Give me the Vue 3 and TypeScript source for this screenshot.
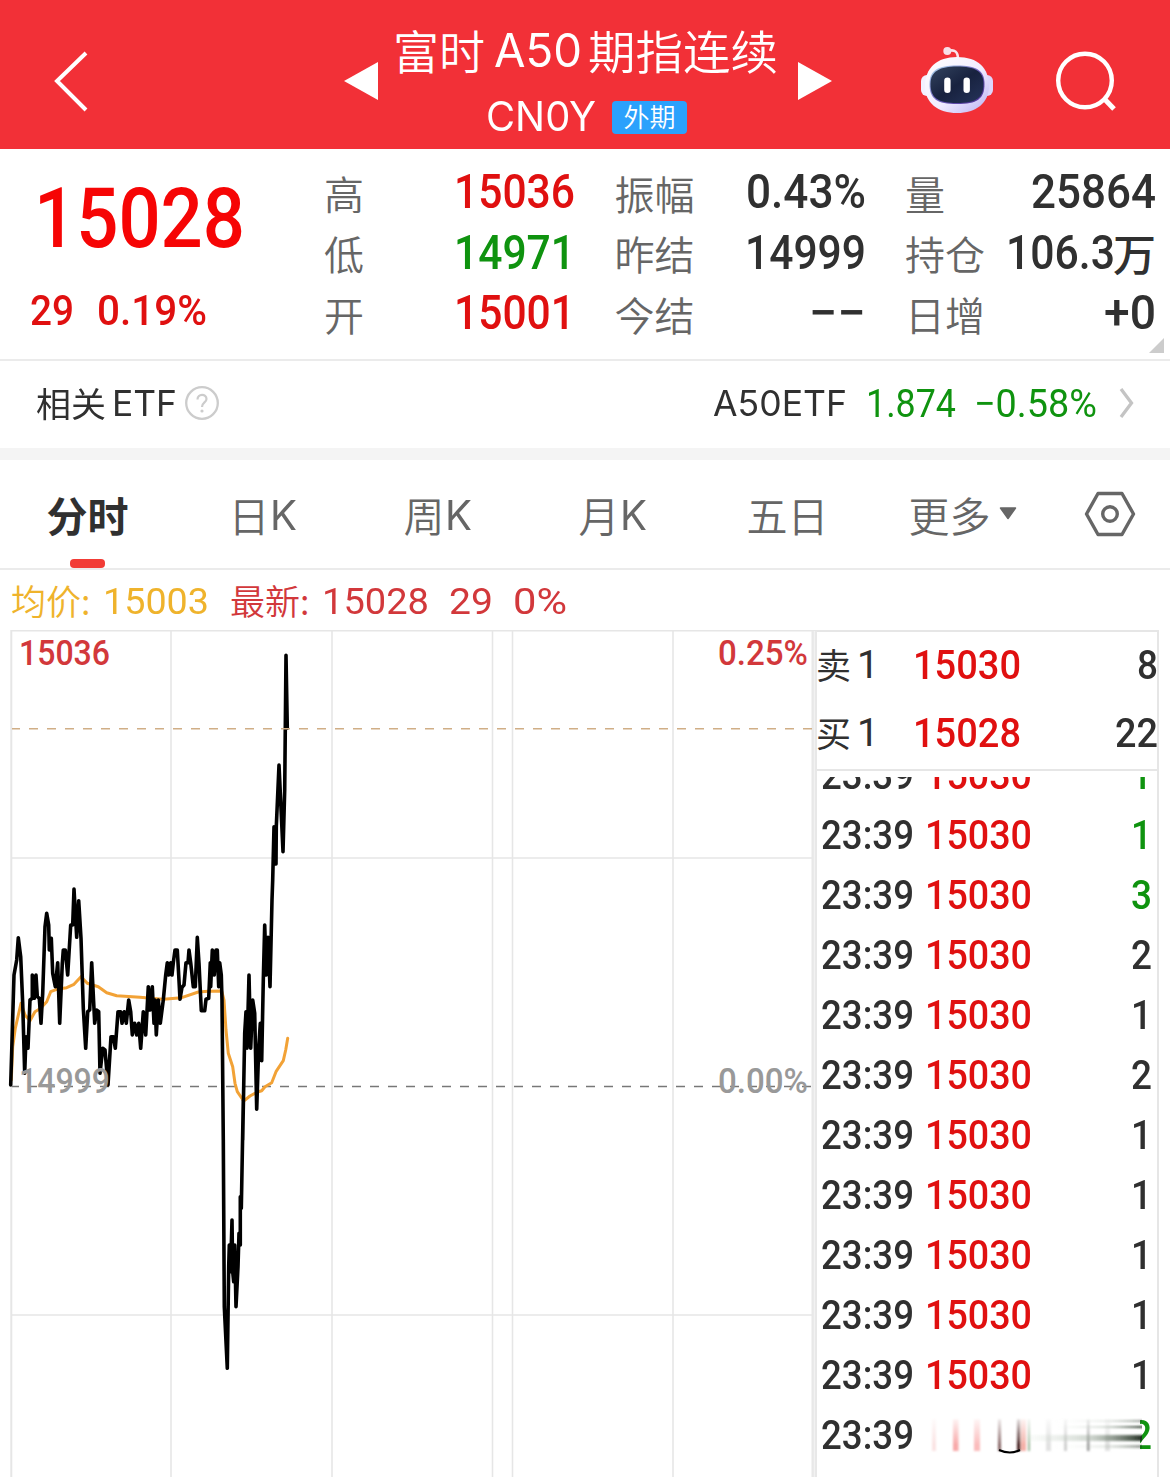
<script setup lang="ts">
import type { Directive } from 'vue'

type Tone = 'up' | 'down' | 'flat'

// Condenses or widens a run of text so that it takes exactly the given width.
const vFit: Directive<HTMLElement, number> = {
  mounted(el, binding) {
    const natural = el.getBoundingClientRect().width
    if (!natural) return
    el.style.transform = `scaleX(${binding.value / natural})`
    el.style.marginRight = `${binding.value - natural}px`
  },
}

interface Stat { label: string; value: string; width: number; tone: Tone; unit?: string }

const stats: Stat[] = [
  { label: '高', value: '15036', width: 121, tone: 'up' },
  { label: '振幅', value: '0.43%', width: 120, tone: 'flat' },
  { label: '量', value: '25864', width: 125, tone: 'flat' },
  { label: '低', value: '14971', width: 121, tone: 'down' },
  { label: '昨结', value: '14999', width: 121, tone: 'flat' },
  { label: '持仓', value: '106.3', width: 109, tone: 'flat', unit: '万' },
  { label: '开', value: '15001', width: 121, tone: 'up' },
  { label: '今结', value: '−−', width: 57, tone: 'flat' },
  { label: '日增', value: '+0', width: 52, tone: 'flat' },
]

const quotes = [
  { side: '卖', price: '15030', qty: '8', width: 21 },
  { side: '买', price: '15028', qty: '22', width: 43 },
]

const trades: { qty: string; tone: Tone }[] = [
  { qty: '1', tone: 'down' },
  { qty: '1', tone: 'down' },
  { qty: '3', tone: 'down' },
  { qty: '2', tone: 'flat' },
  { qty: '1', tone: 'flat' },
  { qty: '2', tone: 'flat' },
  { qty: '1', tone: 'flat' },
  { qty: '1', tone: 'flat' },
  { qty: '1', tone: 'flat' },
  { qty: '1', tone: 'flat' },
  { qty: '1', tone: 'flat' },
]

// Series are stored in thirds of a pixel, relative to the start of each section.
function section(ox: number, oy: number, data: string): string {
  return data
    .trim()
    .split(/\s+/)
    .map((pair) => {
      const [x, y] = pair.split(',').map(Number)
      return `${(ox + x / 3).toFixed(1)},${(oy + y / 3).toFixed(1)}`
    })
    .join(' ')
}

const priceLine = [
  section(0, 860, `32,675 42,345 50,300 55,233 62,290 68,430 74,640 78,530 84,565 90,420 97,415 97,345 103,415 108,345
    112,410 118,415 123,490 128,400 135,200 140,160 146,195 148,270 154,235 158,340 166,380 173,308 179,490 187,310
    190,270 196,270 203,345 212,195 218,195 222,87 230,232 236,122 243,235 250,445 257,565 263,455 269,450 275,308
    284,490 290,450 296,455 300,640 308,565 315,570 324,675 333,530 340,530 346,565 354,455 362,455 366,490 373,455
    379,490 386,420 392,455 397,525 404,490 410,525 416,490 422,565 430,455 437,525 445,380 450,450 457,380 462,490
    465,420 469,525 475,420 481,490 490,420 497,345`),
  section(150, 900, `52,188 56,225 62,188 66,225 70,188 75,150 82,150 86,225 90,298 96,262 102,255 108,188 114,188
    117,150 122,188 130,260 136,260 142,112 147,190 154,332 164,332 168,298 176,295 181,188 182,260 187,150 193,225
    198,150 202,150 206,260 209,188 214,225 216,300 220,720`),
  section(200, 1100, `73,620 82,805 86,500 88,435 91,515 94,435 96,360 98,515 101,545 104,435 108,620 114,500 117,400
    121,435 121,290 124,325 130,0`),
  section(150, 900, `278,720 284,400 288,335 291,445 294,335 297,225 302,445 308,300 314,340 320,628 326,445 331,370
    335,482 340,240 344,75 349,225 354,112 360,260 366,0`),
  section(200, 640, '218,720 222,560 228,672 229,560 237,375 249,635 254,450 258,46 262,265'),
].join(' ')

const averageLine = [
  section(0, 860, `34,660 38,560 46,505 63,430 75,465 90,482 105,455 122,445 140,425 152,395 170,388 200,383 222,373
    243,350 262,370 295,380 320,398 350,407 420,412 470,416`),
  section(150, 900, `40,298 95,293 145,276 175,274 215,273 222,300 228,390 235,460 248,500 255,550 262,575 281,603
    300,588 320,577 335,572 345,560 365,548 378,515 400,482 407,450 413,415`),
].join(' ')

const gridX = [171, 332, 492.5, 512.5, 673]
</script>

<template>
  <div class="page">
    <header class="topbar">
      <svg class="back" width="40" height="64" viewBox="0 0 40 64">
        <path d="M34 4 L5 32 L34 61" fill="none" stroke="#fff" stroke-width="4" />
      </svg>
      <svg class="prev" width="34" height="38" viewBox="0 0 34 38"><path d="M0 19 L34 0 V38 Z" fill="#fff" /></svg>
      <div class="heading">
        <div class="title">
          <span v-fit="92" class="cjk">富时</span>
          <span v-fit="88" class="latin title-latin">A50</span>
          <span v-fit="190" class="cjk rest">期指连续</span>
        </div>
        <div class="subtitle">
          <span v-fit="110" class="latin code">CN0Y</span>
          <span class="badge">外期</span>
        </div>
      </div>
      <svg class="next" width="34" height="38" viewBox="0 0 34 38"><path d="M34 19 L0 0 V38 Z" fill="#fff" /></svg>
      <svg class="robot" width="74" height="68" viewBox="920 46 74 68">
        <defs>
          <linearGradient id="shell" x1="0" y1="0" x2="1" y2="1">
            <stop offset="0" stop-color="#fff" />
            <stop offset=".55" stop-color="#f1ecff" />
            <stop offset="1" stop-color="#b9b0f2" />
          </linearGradient>
          <linearGradient id="rim" x1="0" y1="0" x2="1" y2="1">
            <stop offset="0" stop-color="#b5e2f2" />
            <stop offset=".5" stop-color="#6f62bd" />
            <stop offset="1" stop-color="#4a2a90" />
          </linearGradient>
          <linearGradient id="visor" x1="0" y1="0" x2="1" y2="1">
            <stop offset="0" stop-color="#33435f" />
            <stop offset=".5" stop-color="#18223f" />
            <stop offset="1" stop-color="#25335a" />
          </linearGradient>
        </defs>
        <path d="M948 51 C955 49 958 52 958 59" fill="none" stroke="#fbe4ec" stroke-width="2.6" />
        <circle cx="947.3" cy="51" r="4" fill="#f8dfe8" />
        <rect x="921" y="75" width="14" height="21" rx="6" fill="#f3f0ff" />
        <rect x="979" y="75" width="14" height="21" rx="6" fill="#ddd6fb" />
        <path d="M957 57 C978 57 989 68 989 86 C989 103 976 113 957 113 C938 113 925 103 925 86 C925 68 937 57 957 57Z" fill="url(#shell)" />
        <path d="M957 65.5 C976 65.5 984.500 70 984.500 84 C984.500 99 977 104 957 104 C937 104 929.500 99 929.500 84 C929.500 70 938 65.500 957 65.500Z" fill="url(#rim)" />
        <path d="M957 66.500 C975 66.500 983.500 71 983.500 84 C983.500 98 976 103 957 103 C938 103 930.500 98 930.500 84 C930.500 71 940 66.500 957 66.500Z" fill="url(#visor)" />
        <rect x="944.2" y="77.500" width="6.4" height="15.500" rx="3.200" fill="#fff" />
        <rect x="963.500" y="77.500" width="6.400" height="15.500" rx="3.200" fill="#fff" />
      </svg>
      <svg class="search" width="62" height="62" viewBox="0 0 62 62">
        <circle cx="30" cy="31.500" r="26.800" fill="none" stroke="#fff" stroke-width="4.400" />
        <path d="M49 49.500 L59 60" stroke="#fff" stroke-width="5" />
      </svg>
    </header>

    <section class="summary">
      <div class="last up">
        <div class="last-price"><span v-fit="211" class="num">15028</span></div>
        <div class="last-change">
          <span v-fit="44" class="num">29</span>
          <span v-fit="110" class="num pct">0.19%</span>
        </div>
      </div>
      <div class="stats">
        <div v-for="s in stats" :key="s.label" class="stat">
          <span class="label">{{ s.label }}</span>
          <span class="value" :class="s.tone">
            <span v-fit="s.width" class="num">{{ s.value }}</span><span v-if="s.unit" class="unit">{{ s.unit }}</span>
          </span>
        </div>
      </div>
      <svg class="corner" width="15" height="15" viewBox="0 0 15 15"><path d="M15 0 V15 H0Z" fill="#ccc" /></svg>
    </section>

    <section class="etf">
      <span v-fit="70" class="etf-cjk">相关</span>
      <span v-fit="65" class="latin etf-latin etf-word">ETF</span>
      <svg class="help" width="34" height="34" viewBox="0 0 34 34">
        <circle cx="17" cy="17" r="15.800" fill="none" stroke="#ccc" stroke-width="2.300" />
        <path d="M12.500 13.500 C12.500 7.500 21.500 7.500 21.500 13 C21.500 16.500 17 16.500 17 21" fill="none" stroke="#ccc" stroke-width="2.200" />
        <circle cx="17" cy="25" r="1.600" fill="#ccc" />
      </svg>
      <span v-fit="134" class="latin etf-latin etf-name">A50ETF</span>
      <span v-fit="90" class="num etf-num etf-price">1.874</span>
      <span v-fit="123" class="num etf-num etf-pct">−0.58%</span>
      <svg class="more" width="16" height="32" viewBox="0 0 16 32">
        <path d="M3 2 L13.500 16 L3 30" fill="none" stroke="#c4c4c4" stroke-width="3.300" />
      </svg>
    </section>

    <nav class="tabs">
      <div class="tab active">分时</div>
      <div class="tab">日<span v-fit="27" class="k">K</span></div>
      <div class="tab">周<span v-fit="27" class="k">K</span></div>
      <div class="tab">月<span v-fit="27" class="k">K</span></div>
      <div class="tab">五日</div>
      <div class="tab dropdown">
        更多
        <svg width="18" height="13" viewBox="0 0 18 13"><path d="M1.500 1 H16.500 L9 11.500Z" fill="#666" stroke="#666" stroke-width="1.500" stroke-linejoin="round" /></svg>
      </div>
      <div class="tab gear">
        <svg width="52" height="48" viewBox="0 0 52 48">
          <path d="M14 3.500 H38 L49.500 24 L38 44.500 H14 L2.500 24Z" fill="none" stroke="#666" stroke-width="3.400" stroke-linejoin="round" />
          <circle cx="26" cy="24" r="7.300" fill="none" stroke="#666" stroke-width="3.400" />
        </svg>
      </div>
    </nav>

    <div class="legend">
      <span class="avg-text"><span class="legend-cjk">均价:</span><span v-fit="106" class="legend-num">15003</span></span>
      <span class="now-text">
        <span class="legend-cjk">最新:</span><span v-fit="107" class="legend-num">15028</span>
        <span v-fit="44" class="legend-num delta">29</span>
        <span v-fit="54" class="legend-num rate">0%</span>
      </span>
    </div>

    <main class="board">
      <svg class="chart" width="817" height="847" viewBox="0 630 817 847">
        <g stroke="#e6e6e6" stroke-width="1.600" fill="none">
          <path v-for="x in gridX" :key="x" :d="`M${x} 631 V1477`" />
          <path d="M11 630.800 H817 M11 858 H812 M11 1315 H812" />
          <path d="M11.300 630 V1477" stroke-width="2" />
        </g>
        <rect x="811.500" y="631" width="5.500" height="846" fill="#e8e8e8" />
        <rect x="813.800" y="631" width="1" height="846" fill="#f4f4f4" />
        <path d="M12 1086.500 H812" stroke="#777" stroke-width="1.500" stroke-dasharray="9 9" stroke-dashoffset="2" />
        <polyline :points="averageLine" fill="none" stroke="#f2a236" stroke-width="3" stroke-linejoin="round" stroke-linecap="round" />
        <polyline :points="priceLine" fill="none" stroke="#000" stroke-width="3.600" stroke-linejoin="round" stroke-linecap="round" />
        <path d="M12 728.700 H812" stroke="#d0ae86" stroke-width="1.500" stroke-dasharray="9 9" stroke-dashoffset="1" />
        <g class="axis">
          <text x="19" y="665" textLength="91" lengthAdjust="spacingAndGlyphs" fill="#d2383b">15036</text>
          <text x="718" y="665" textLength="90" lengthAdjust="spacingAndGlyphs" fill="#d2383b">0.25%</text>
          <text x="19" y="1093" textLength="91" lengthAdjust="spacingAndGlyphs" fill="#999">14999</text>
          <text x="718" y="1093" textLength="90" lengthAdjust="spacingAndGlyphs" fill="#999">0.00%</text>
        </g>
      </svg>

      <aside class="book">
        <div class="quotes">
          <div v-for="q in quotes" :key="q.side" class="quote">
            <span class="side">{{ q.side }}</span>
            <span class="level">1</span>
            <span v-fit="108" class="num quote-price up">{{ q.price }}</span>
            <span v-fit="q.width" class="num qty flat">{{ q.qty }}</span>
          </div>
        </div>
        <div class="ticks">
          <div class="tick-list">
            <div v-for="(t, i) in trades" :key="i" class="tick">
              <span v-fit="93" class="num time">23:39</span>
              <span v-fit="107" class="num tick-price up">15030</span>
              <span v-fit="21" class="num qty" :class="t.tone">{{ t.qty }}</span>
            </div>
            <div class="tick">
              <span v-fit="93" class="num time">23:39</span>
              <span class="fading">
                <span v-fit="21" class="num qty down">2</span>
                <svg class="smear" width="225" height="40" viewBox="920 1414 225 40">
                  <defs>
                    <linearGradient id="fall" x1="0" y1="0" x2="0" y2="1">
                      <stop offset="0" stop-color="#fff" stop-opacity="1" />
                      <stop offset="1" stop-color="#fff" stop-opacity="0" />
                    </linearGradient>
                    <linearGradient id="streak" x1="0" y1="0" x2="1" y2="0">
                      <stop offset="0" stop-color="#e4efe4" stop-opacity="0" />
                      <stop offset=".6" stop-color="#9aa99a" stop-opacity=".45" />
                      <stop offset="1" stop-color="#1c2a1c" stop-opacity=".95" />
                    </linearGradient>
                    <filter id="soft" x="-20%" y="-20%" width="140%" height="140%"><feGaussianBlur stdDeviation="1.300" /></filter>
                    <filter id="soft-y" x="-5%" y="-20%" width="110%" height="140%"><feGaussianBlur stdDeviation="0.600 1.200" /></filter>
                  </defs>
                  <rect x="920" y="1414" width="220" height="40" fill="#fff" />
                  <g filter="url(#soft)">
                    <rect x="932" y="1418" width="4" height="32" fill="#fbe3e3" />
                    <rect x="953" y="1418" width="5.500" height="32" fill="#f8a9a9" />
                    <rect x="974" y="1418" width="6" height="32" fill="#fbbcbc" />
                    <rect x="998" y="1418" width="3" height="32" fill="#866" />
                    <rect x="1017" y="1418" width="3.500" height="32" fill="#422" />
                    <rect x="1021" y="1418" width="5" height="32" fill="#f5b0a8" />
                    <rect x="1028" y="1418" width="2" height="32" fill="#9ab89a" />
                    <rect x="1046" y="1418" width="5" height="32" fill="#e2e2e2" />
                    <rect x="1064" y="1418" width="3" height="32" fill="#d0d0d0" />
                    <rect x="1087" y="1418" width="2.500" height="32" fill="#999" />
                    <rect x="1105" y="1418" width="5" height="32" fill="#e2e2e2" />
                  </g>
                  <rect x="920" y="1414" width="220" height="30" fill="url(#fall)" />
                  <g filter="url(#soft-y)">
                    <rect x="1055" y="1419" width="87" height="2" fill="url(#streak)" opacity=".5" />
                    <rect x="1055" y="1425" width="87" height="2" fill="url(#streak)" />
                    <rect x="1010" y="1434" width="132" height="6" fill="url(#streak)" />
                    <rect x="1055" y="1444" width="87" height="3" fill="url(#streak)" opacity=".5" />
                  </g>
                  <path d="M999 1449 Q1010 1454 1020 1449" fill="none" stroke="#000" stroke-width="2" />
                </svg>
              </span>
            </div>
          </div>
        </div>
      </aside>
    </main>
  </div>
</template>

<style>
body {
  margin: 0;
  background: #fff;
}
</style>

<style scoped>
.page {
  width: 1170px;
  height: 1477px;
  overflow: hidden;
  background: #fff;
  color: #303030;
  font-family: "Noto Sans CJK SC", sans-serif;
  white-space: nowrap;
}
.page svg {
  display: block;
  flex: none;
}
span {
  flex: none;
}
.num,
.latin,
.legend-num,
.k,
.cjk,
.etf-cjk {
  display: inline-block;
  transform-origin: 0 50%;
}
.num {
  font-family: Roboto, sans-serif;
  font-weight: 500;
}
.latin,
.k {
  font-family: Inter, sans-serif;
  font-weight: 400;
}
.up { color: #e01010; }
.down { color: #0f930f; }
.flat { color: #303030; }

.topbar {
  display: flex;
  height: 149px;
  background: #f23037;
  color: #fff;
}
.back { margin: 49px 0 0 52px; }
.prev { margin: 62px 0 0 252px; }
.heading {
  width: 420px;
  height: 149px;
}
.title {
  display: flex;
  align-items: center;
  height: 60px;
  padding: 19px 0 0 15px;
  font-size: 46px;
  font-weight: 350;
  line-height: 60px;
}
.title-latin {
  margin: 2px 0 0 9px;
  font-size: 47px;
}
.rest { margin-left: 6px; }
.subtitle {
  display: flex;
  align-items: center;
  height: 50px;
  margin-top: 13px;
  padding-left: 108px;
}
.code {
  margin-bottom: 2px;
  font-size: 41px;
  line-height: 50px;
}
.badge {
  width: 75px;
  height: 33px;
  margin-left: 16px;
  border-radius: 4px;
  background: #2ba1fc;
  font-size: 26px;
  font-weight: 350;
  line-height: 30px;
  text-align: center;
}
.next { margin: 62px 0 0 0; }
.robot { margin: 46px 0 0 88px; }
.search { margin: 49px 0 0 61px; }

.summary {
  position: relative;
  display: flex;
  height: 210px;
  border-bottom: 2px solid #ebebeb;
}
.last { width: 324px; }
.last-price {
  height: 84px;
  padding: 20px 0 0 34px;
  font-size: 84px;
  line-height: 84px;
  color: #f60505;
}
.last-change {
  display: flex;
  margin-top: 32px;
  padding-left: 30px;
  font-size: 43px;
  line-height: 50px;
}
.pct { margin-left: 23px; }
.stats {
  display: grid;
  grid-template-columns: repeat(3, 251px);
  grid-auto-rows: 60.600px;
  column-gap: 39.500px;
  height: 182px;
  padding-top: 13px;
}
.stat {
  display: flex;
  align-items: center;
  justify-content: space-between;
}
.label {
  padding-top: 1px;
  font-size: 40px;
  font-weight: 350;
  line-height: 60px;
  color: #666;
}
.value {
  display: flex;
  align-items: center;
  font-size: 47.500px;
  line-height: 60px;
}
.unit {
  margin: -2px 0 0 -2px;
  font-size: 43px;
  font-weight: 500;
}
.corner {
  position: absolute;
  right: 6px;
  bottom: 6px;
}

.etf {
  display: flex;
  align-items: center;
  box-sizing: border-box;
  height: 99px;
  padding: 0 0 3px 36px;
  border-bottom: 12px solid #f4f4f4;
}
.etf-cjk {
  font-size: 34px;
  line-height: 60px;
}
.etf-latin {
  font-size: 35px;
  line-height: 60px;
}
.etf-word { margin-left: 6px; }
.help { margin-left: 8px; }
.etf-name { margin-left: 494px; }
.etf-num {
  padding-top: 1px;
  font-size: 38.500px;
  font-weight: 400;
  line-height: 60px;
  color: #0f930f;
}
.etf-price { margin-left: 19px; }
.etf-pct { margin-left: 18px; }
.more { margin-left: 21px; }

.tabs {
  display: grid;
  grid-template-columns: repeat(6, 175px) 120px;
  box-sizing: border-box;
  height: 110px;
  border-bottom: 2px solid #ebebeb;
  font-size: 41px;
  font-weight: 350;
  color: #666;
}
.tab {
  position: relative;
  display: flex;
  align-items: center;
  justify-content: center;
  height: 107px;
}
.k {
  margin-top: 2px;
  font-size: 41px;
}
.active {
  height: 108px;
  font-weight: 700;
  color: #303030;
}
.active::after {
  position: absolute;
  bottom: 0;
  left: 70px;
  width: 35px;
  height: 9px;
  border-radius: 4px;
  background: #f23c36;
  content: "";
}
.dropdown svg { margin-left: 8px; }

.legend {
  display: flex;
  align-items: center;
  height: 60px;
  padding-left: 11px;
  font-size: 36px;
  line-height: 58px;
}
.legend-num {
  padding-top: 3px;
  font-family: Roboto, sans-serif;
  font-weight: 400;
}
.avg-text,
.now-text {
  display: flex;
  align-items: center;
}
.avg-text { color: #efb32c; }
.now-text {
  margin-left: 21px;
  color: #d2383b;
}
.legend-cjk {
  width: 92px;
  font-size: 35px;
  font-weight: 350;
}
.delta { margin-left: 20px; }
.rate { margin-left: 20px; }

.board {
  display: flex;
  height: 847px;
}
.axis {
  font: 500 35px Roboto, sans-serif;
}
.book {
  display: flex;
  flex-direction: column;
  width: 342px;
  border-top: 2px solid #e6e6e6;
  border-right: 2px solid #e6e6e6;
  box-sizing: border-box;
}
.quotes {
  height: 137px;
  border-bottom: 2px solid #e6e6e6;
}
.quote {
  display: flex;
  align-items: center;
  height: 72px;
  margin-right: -1px;
  font-size: 41.500px;
  line-height: 38px;
}
.quote:first-child {
  height: 65px;
}
.side {
  margin: -2px 0 0 -1px;
  font-size: 35px;
}
.level {
  width: 22px;
  margin-left: 6px;
  font-family: Roboto, sans-serif;
  font-size: 39px;
  font-weight: 400;
}
.quote-price { margin-left: 34px; }
.qty { margin-left: auto; }
.ticks {
  height: 700px;
  margin-top: 6px;
  overflow: hidden;
}
.tick-list { margin-top: -32px; }
.tick {
  display: flex;
  align-items: center;
  height: 60px;
  padding: 0 5px 0 4px;
  font-size: 41.500px;
  line-height: 38px;
}
.tick-price { margin-left: 11px; }
.fading {
  position: relative;
  display: flex;
  flex: 1;
}
.smear {
  position: absolute;
  top: -1px;
  left: 6px;
}
</style>
